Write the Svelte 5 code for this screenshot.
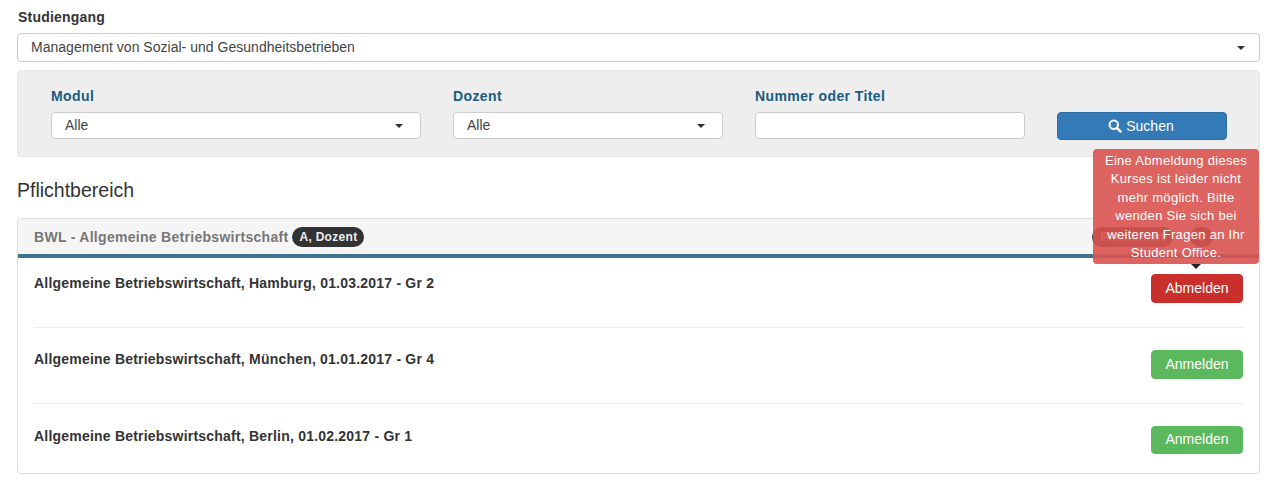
<script>
  const rows = [
    { title: 'Allgemeine Betriebswirtschaft, Hamburg, 01.03.2017 - Gr 2', label: 'Abmelden', kind: 'off' },
    { title: 'Allgemeine Betriebswirtschaft, München, 01.01.2017 - Gr 4', label: 'Anmelden', kind: 'on' },
    { title: 'Allgemeine Betriebswirtschaft, Berlin, 01.02.2017 - Gr 1', label: 'Anmelden', kind: 'on' }
  ];
</script>

<div class="page">
  <div class="label-top">Studiengang</div>
  <div class="select wide"><span>Management von Sozial- und Gesundheitsbetrieben</span><i class="caret"></i></div>

  <div class="filter">
    <div class="field f1">
      <div class="flabel">Modul</div>
      <div class="select"><span>Alle</span><i class="caret"></i></div>
    </div>
    <div class="field f2">
      <div class="flabel">Dozent</div>
      <div class="select"><span>Alle</span><i class="caret"></i></div>
    </div>
    <div class="field f3">
      <div class="flabel">Nummer oder Titel</div>
      <div class="select input"></div>
    </div>
    <button class="search">
      <svg width="14" height="14" viewBox="0 0 14 14"><circle cx="5.8" cy="5.8" r="4.2" fill="none" stroke="#fff" stroke-width="2"/><path d="M8.8 8.8 L12.6 12.6" stroke="#fff" stroke-width="2.4" stroke-linecap="round"/></svg>
      Suchen
    </button>
  </div>

  <h2>Pflichtbereich</h2>

  <div class="panel">
    <div class="head">
      <div class="head-left">
        <span class="head-title">BWL - Allgemeine Betriebswirtschaft</span>
        <span class="pill">A, Dozent</span>
      </div>
      <div class="head-right">
        <span class="pill wide-pill">Permanent</span>
        <span class="pill num">0</span>
      </div>
    </div>
    <div class="body">
      {#each rows as r, i}
        <div class="row">
          <div class="rtitle">{r.title}</div>
          <div class="btn-wrap">
            <button class="act {r.kind}">{r.label}</button>
            {#if r.kind === 'off'}
              <div class="tip">
                Eine Abmeldung dieses Kurses ist leider nicht mehr möglich. Bitte wenden Sie sich bei weiteren Fragen an Ihr Student Office.
                <i class="arrow"></i>
              </div>
            {/if}
          </div>
        </div>
      {/each}
    </div>
  </div>
</div>

<style>
  :global(body) {
    margin: 0;
    background: #fff;
    font-family: "Liberation Sans", Arial, sans-serif;
    font-size: 14px;
    color: #333;
  }
  .page {
    width: 1243px;
    padding: 9px 0 0 17px;
  }
  .label-top {
    font-weight: 700;
    font-size: 14px;
    line-height: 16px;
    letter-spacing: 0.2px;
    padding-left: 1px;
    margin-bottom: 8px;
    color: #333;
  }
  .select {
    box-sizing: border-box;
    height: 27px;
    background: #fff;
    border: 1px solid #ccc;
    border-radius: 4px;
    display: flex;
    align-items: center;
    justify-content: space-between;
    padding: 0 17px 1px 13px;
    color: #444;
    font-size: 14px;
    letter-spacing: 0.02px;
  }
  .select.wide {
    height: 29px;
    padding-right: 14px;
    margin-bottom: 8px;
  }
  .caret {
    width: 0;
    height: 0;
    border-left: 4px solid transparent;
    border-right: 4px solid transparent;
    border-top: 4px solid #333;
    margin-top: 1px;
  }
  .filter {
    box-sizing: border-box;
    height: 87px;
    background: #eee;
    border: 1px solid #e6e6e6;
    border-radius: 4px;
    display: flex;
    align-items: flex-start;
    padding: 16px 0 0 33px;
  }
  .field { flex: none; }
  .f1 { width: 370px; margin-right: 32px; }
  .f2 { width: 270px; margin-right: 32px; }
  .f3 { width: 270px; margin-right: 32px; }
  .flabel {
    font-weight: 700;
    font-size: 14px;
    line-height: 18px;
    letter-spacing: 0.4px;
    color: #1a5c7e;
    margin-bottom: 7px;
  }
  .search {
    box-sizing: border-box;
    width: 170px;
    height: 28px;
    margin-top: 25px;
    background: #337ab7;
    border: 1px solid #2e6da4;
    border-radius: 4px;
    color: #fff;
    font: 14px "Liberation Sans", Arial, sans-serif;
    display: flex;
    align-items: center;
    justify-content: center;
    gap: 4px;
    padding: 0 2px 1px 0;
  }
  h2 {
    margin: 22px 0 17px;
    font-weight: 400;
    font-size: 19.5px;
    line-height: 22px;
    color: #333;
  }
  .panel {
    box-sizing: border-box;
    background: #fff;
    border: 1px solid #ddd;
    border-radius: 4px;
    box-shadow: 0 1px 1px rgba(0,0,0,.05);
  }
  .head {
    box-sizing: border-box;
    height: 39px;
    background: #f5f5f5;
    border-bottom: 4px solid #3f7391;
    display: flex;
    justify-content: space-between;
    align-items: center;
    padding: 1px 16px 0;
    border-radius: 3px 3px 0 0;
  }
  .head-left, .head-right { display: flex; align-items: center; gap: 4px; }
  .head-right { margin-right: 30px; gap: 17px; }
  .head-title {
    font-weight: 700;
    font-size: 14px;
    letter-spacing: 0.29px;
    color: #777;
    margin-top: -1px;
  }
  .pill {
    background: #333;
    color: #eee;
    font-weight: 700;
    font-size: 12px;
    line-height: 12px;
    letter-spacing: 0.3px;
    padding: 4px 7px;
    border-radius: 10px;
  }
  .pill.wide-pill { padding: 4px 8px; }
  .pill.num { padding: 4px 8px; }
  .body { padding: 0 16px; }
  .row {
    box-sizing: border-box;
    height: 76px;
    display: flex;
    justify-content: space-between;
    align-items: flex-start;
    padding-top: 22px;
    border-bottom: 1px solid #eee;
  }
  .row:first-child { height: 69.5px; padding-top: 16px; }
  .row:last-child { border-bottom: none; height: 69px; }
  .rtitle {
    font-weight: 700;
    font-size: 14px;
    line-height: 18px;
    letter-spacing: 0.21px;
    color: #333;
  }
  .row:last-child .rtitle { margin-top: 1px; }
  .btn-wrap { position: relative; }
  .act {
    box-sizing: border-box;
    width: 92px;
    height: 29px;
    border-radius: 4px;
    color: #fff;
    font: 14px "Liberation Sans", Arial, sans-serif;
    padding: 0 0 1px;
    display: block;
  }
  .row:last-child .act { height: 28px; }
  .act.off { background: #c9302c; border: 1px solid #c9302c; }
  .act.on { background: #5cb85c; border: 1px solid #5cb85c; }
  .tip {
    position: absolute;
    right: -16px;
    bottom: 39px;
    box-sizing: border-box;
    width: 166px;
    height: 115px;
    padding: 3px 8px;
    background: rgba(217, 83, 79, 0.9);
    border-radius: 4px;
    color: #fff;
    text-align: center;
    font-size: 13px;
    line-height: 18.4px;
    letter-spacing: 0.3px;
  }
  .arrow {
    position: absolute;
    left: 98px;
    bottom: -5px;
    width: 0;
    height: 0;
    border-left: 5px solid transparent;
    border-right: 5px solid transparent;
    border-top: 5px solid #222;
  }
</style>
